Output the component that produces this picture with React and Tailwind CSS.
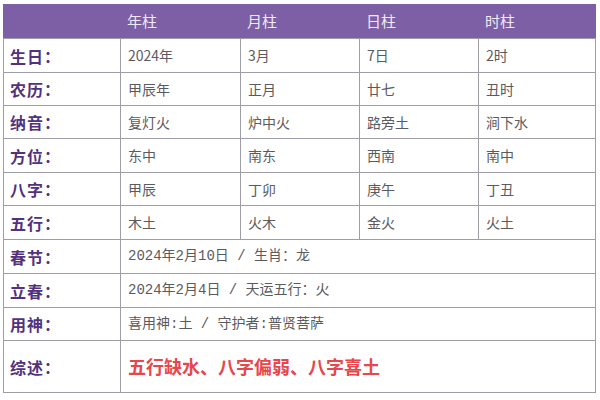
import React from "react";

const cols = "grid grid-cols-[116px_120px_119px_119px_1fr]";
const font = { fontFamily: '"Noto Sans CJK SC", "Noto Sans", sans-serif' };
const monoFont = { fontFamily: '"Liberation Mono", "Noto Sans CJK SC", monospace' };

const rows = [
  ["生日", ["2024年", "3月", "7日", "2时"], 34],
  ["农历", ["甲辰年", "正月", "廿七", "丑时"], 33],
  ["纳音", ["复灯火", "炉中火", "路旁土", "涧下水"], 33],
  ["方位", ["东中", "南东", "西南", "南中"], 34],
  ["八字", ["甲辰", "丁卯", "庚午", "丁丑"], 33],
  ["五行", ["木土", "火木", "金火", "火土"], 34],
];

const spanRows = [
  ["春节", "2024年2月10日 / 生肖：龙", 34],
  ["立春", "2024年2月4日 / 天运五行：火", 34],
  ["用神", "喜用神:土 / 守护者:普贤菩萨", 33],
];

function Label({ text }) {
  return (
    <div className="flex items-center pl-[6px] text-[16px] font-bold text-[#52327f] tracking-[1px]">
      {text}：
    </div>
  );
}

export default function App() {
  return (
    <div className="w-[600px] h-[400px] bg-white pt-[4px] pl-[3px]" style={font}>
      <div className="w-[593px]">
        <div className={`${cols} h-[34px] bg-[#7c5fa5] text-[15px] text-[#efe9f6]`}>
          <div />
          {["年柱", "月柱", "日柱", "时柱"].map((t) => (
            <div key={t} className="flex items-center pl-[8px]">{t}</div>
          ))}
        </div>
        <div className="border-x border-b border-[#9f9da6]">
          {rows.map(([label, vals, h]) => (
            <div key={label} className={`${cols} border-t border-[#9f9da6]`} style={{ height: h }}>
              <Label text={label} />
              {vals.map((v, i) => (
                <div key={i} className="flex items-center pl-[7px] border-l border-[#9f9da6] text-[14px] text-[#5b5b5f]">
                  {v}
                </div>
              ))}
            </div>
          ))}
          {spanRows.map(([label, val, h]) => (
            <div key={label} className={`${cols} border-t border-[#9f9da6]`} style={{ height: h }}>
              <Label text={label} />
              <div
                className="col-span-4 flex items-center pl-[7px] border-l border-[#9f9da6] text-[14px] text-[#5b5b5f] whitespace-pre"
                style={monoFont}
              >
                {val}
              </div>
            </div>
          ))}
          <div className={`${cols} h-[52px] border-t border-[#9f9da6]`}>
            <Label text="综述" />
            <div className="col-span-4 flex items-center pl-[7px] border-l border-[#9f9da6] text-[18px] font-bold text-[#e8464c]">
              五行缺水、八字偏弱、八字喜土
            </div>
          </div>
        </div>
      </div>
    </div>
  );
}
